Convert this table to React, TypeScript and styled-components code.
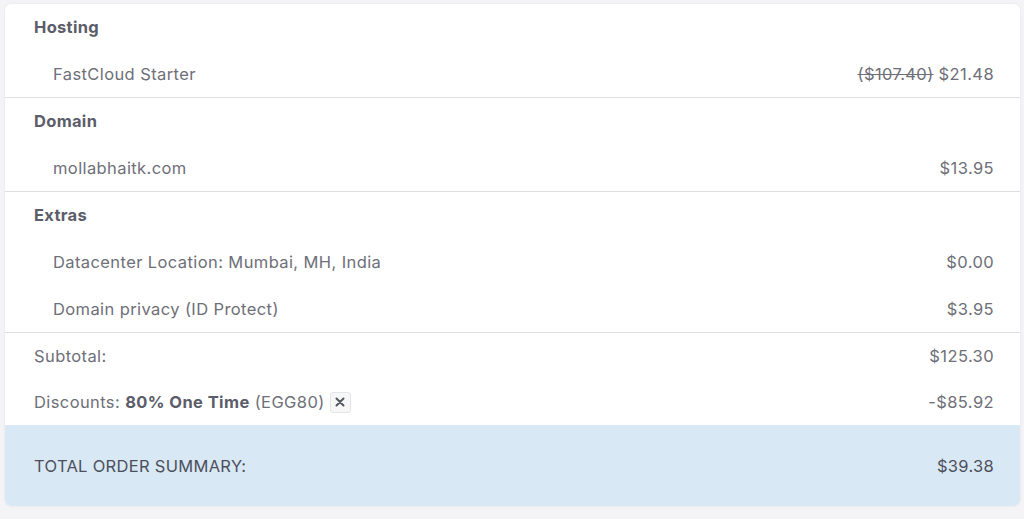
import React from 'react';
import styled, { createGlobalStyle } from 'styled-components';

const GlobalStyle = createGlobalStyle`
  html, body {
    margin: 0;
    padding: 0;
    background: #f4f4f6;
    font-family: Inter, "Noto Sans", "Liberation Sans", sans-serif;
  }
`;

type Item = { label: string; price: string; oldPrice?: string };
type Section = { title: string; items: Item[] };

const sections: Section[] = [
  { title: 'Hosting', items: [{ label: 'FastCloud Starter', oldPrice: '($107.40)', price: '$21.48' }] },
  { title: 'Domain', items: [{ label: 'mollabhaitk.com', price: '$13.95' }] },
  {
    title: 'Extras',
    items: [
      { label: 'Datacenter Location: Mumbai, MH, India', price: '$0.00' },
      { label: 'Domain privacy (ID Protect)', price: '$3.95' },
    ],
  },
];

export default function App() {
  return (
    <>
      <GlobalStyle />
      <Page>
        <Card>
          {sections.map((s) => (
            <Group key={s.title}>
              <Heading>{s.title}</Heading>
              {s.items.map((it) => (
                <Row key={it.label} indent>
                  <span>{it.label}</span>
                  <span>
                    {it.oldPrice && <Old>{it.oldPrice}</Old>}
                    {it.price}
                  </span>
                </Row>
              ))}
            </Group>
          ))}
          <Group>
            <Row compact>
              <span>Subtotal:</span>
              <span>$125.30</span>
            </Row>
            <Row compact>
              <Label>
                Discounts: <b>80% One Time</b> (EGG80)
                <RemoveBtn type="button" aria-label="Remove">
                  <svg width="10" height="10" viewBox="0 0 10 10">
                    <path d="M1.5 1.5 L8.5 8.5 M8.5 1.5 L1.5 8.5" stroke="#55575f" strokeWidth="2" strokeLinecap="round" />
                  </svg>
                </RemoveBtn>
              </Label>
              <span>-$85.92</span>
            </Row>
          </Group>
          <Total>
            <span>TOTAL ORDER SUMMARY:</span>
            <span>$39.38</span>
          </Total>
        </Card>
      </Page>
    </>
  );
}

const Page = styled.div`
  padding: 4px 4px 14px 5px;
`;

const Card = styled.div`
  width: 1015px;
  background: #fff;
  border-radius: 6px;
  box-shadow: 0 0 3px rgba(0, 0, 0, 0.07);
  overflow: hidden;
`;

const Group = styled.div`
  border-bottom: 1px solid #dedfe3;
  &:nth-last-child(2) {
    border-bottom: none;
  }
`;

const Heading = styled.div`
  height: 46px;
  display: flex;
  align-items: center;
  padding: 0 29px;
  font-size: 16.5px;
  letter-spacing: 0.3px;
  font-weight: 700;
  color: #5b5d6a;
`;

const Row = styled.div<{ indent?: boolean; compact?: boolean }>`
  height: ${(p) => (p.compact ? 46 : 47)}px;
  display: flex;
  align-items: center;
  justify-content: space-between;
  padding: 0 26px 0 ${(p) => (p.indent ? 48 : 29)}px;
  font-size: 16.5px;
  letter-spacing: 0.4px;
  color: #6e6f78;
  b {
    font-weight: 700;
    color: #5b5d6a;
  }
`;

const Label = styled.span`
  display: inline-flex;
  align-items: center;
  white-space: pre;
`;

const Old = styled.s`
  margin-right: 5px;
`;

const RemoveBtn = styled.button`
  display: inline-flex;
  align-items: center;
  justify-content: center;
  width: 21px;
  height: 21px;
  padding: 0;
  margin-left: 5px;
  border: 1px solid #e4e5e8;
  border-radius: 3px;
  background: #f7f7f8;
`;

const Total = styled.div`
  height: 81px;
  display: flex;
  align-items: center;
  justify-content: space-between;
  padding: 0 26px 0 29px;
  background: #d9e8f5;
  color: #4c505b;
  font-size: 16.5px;
  letter-spacing: 0.3px;
`;
